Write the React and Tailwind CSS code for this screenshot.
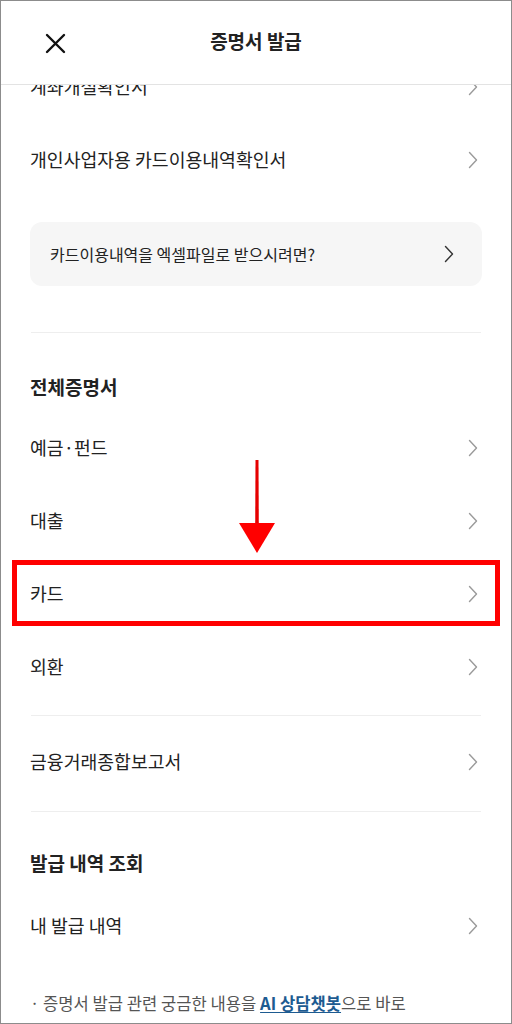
const font = { fontFamily: '"Noto Sans CJK KR", "Noto Sans", sans-serif' }

function Chevron({ color = '#9a9a9a' }) {
  return (
    <svg width="10" height="18" viewBox="0 0 10 18" fill="none">
      <polyline points="1.5,1.5 8.5,9 1.5,16.5" stroke={color} strokeWidth="1.4" strokeLinecap="round" strokeLinejoin="round" />
    </svg>
  )
}

function Row({ label, children, className = '' }) {
  return (
    <div className={`relative h-[73px] flex items-center justify-between pl-[29px] pr-[33px] ${className}`}>
      <span className="text-[18.3px] text-[#222]">{label}</span>
      <Chevron />
      {children}
    </div>
  )
}

function Divider() {
  return <div className="mx-[30px] h-px bg-[#eeeeee]" />
}

export default function App() {
  return (
    <div style={font} className="relative w-[512px] h-[1024px] overflow-hidden bg-white border border-[#8c8c8c]">
      {/* Header */}
      <div className="relative z-10 h-[84px] bg-white border-b border-[#e3e3e3] flex items-center justify-center">
        <svg className="absolute left-[44px] top-[32px]" width="21" height="21" viewBox="0 0 21 21">
          <path d="M2 2 L19 19 M19 2 L2 19" stroke="#111" strokeWidth="2.4" strokeLinecap="round" />
        </svg>
        <h1 className="text-[19px] font-bold text-[#222] -mt-[2px]">증명서 발급</h1>
      </div>

      {/* Content */}
      <div className="-mt-[35px]">
        <Row label="계좌개설확인서" />
        <Row label="개인사업자용 카드이용내역확인서" />

        <div className="mt-[26px] mx-[29px] h-[64px] rounded-[12px] bg-[#f6f6f6] flex items-center justify-between pl-[20px] pr-[28px]">
          <span className="text-[16px] text-[#222]">카드이용내역을 엑셀파일로 받으시려면?</span>
          <Chevron color="#333" />
        </div>

        <div className="mt-[46px]">
          <Divider />
        </div>

        <h2 className="pl-[29px] pt-[40px] pb-[10px] leading-[28px] text-[19px] font-bold text-[#222]">전체증명서</h2>
        <Row label="예금·펀드" />
        <Row label="대출" />
        <Row label="카드" className="h-[72px]">
          <div className="absolute left-[11px] right-[11px] top-[3px] bottom-[4px] border-[5px] border-[#ff0000]" />
        </Row>
        <Row label="외환" />

        <div className="mt-[12px] mb-[9px]">
          <Divider />
        </div>
        <Row label="금융거래종합보고서" />
        <div className="mt-[13px]">
          <Divider />
        </div>

        <h2 className="pl-[29px] pt-[37px] pb-[12px] leading-[28px] text-[19px] font-bold text-[#222]">발급 내역 조회</h2>
        <Row label="내 발급 내역" />

        <p className="mt-[30px] pl-[29px] text-[16.6px] leading-[22px] text-[#555] whitespace-nowrap">
          · 증명서 발급 관련 궁금한 내용을{' '}
          <span className="font-bold text-[#1d5b91] underline underline-offset-2">AI 상담챗봇</span>으로 바로
        </p>
      </div>

      {/* Arrow overlay */}
      <svg className="absolute left-[235px] top-[457px]" width="42" height="98" viewBox="0 0 42 98">
        <path d="M19.5 2 L22.5 2 L22.8 67 L19.2 67 Z" fill="#e60000" />
        <polygon points="3,65 39,65 21,95" fill="#ff0000" />
      </svg>
    </div>
  )
}
